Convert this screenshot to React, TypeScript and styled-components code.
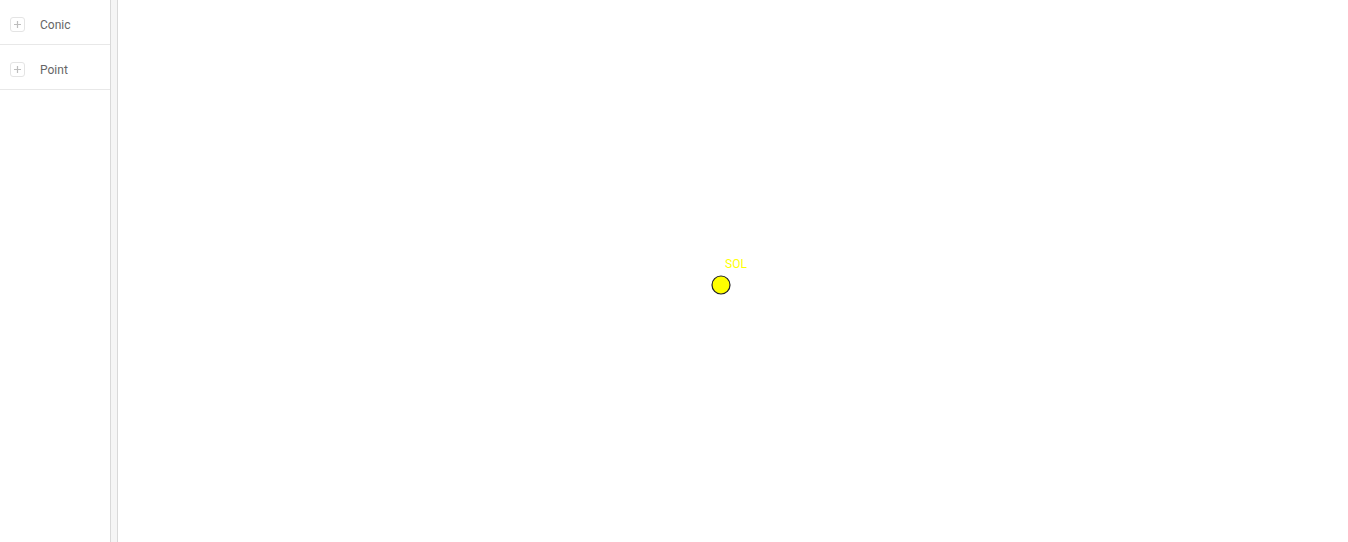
import React from "react";
import styled, { createGlobalStyle } from "styled-components";

const Global = createGlobalStyle`
  html, body { margin: 0; padding: 0; background: #fff; }
  body { font-family: Roboto, "Liberation Sans", Arial, sans-serif; }
  #root { height: 100vh; }
`;

const Layout = styled.div`
  display: flex;
  height: 100vh;
  overflow: hidden;
`;

const Sidebar = styled.aside`
  width: 110px;
  flex: none;
  display: flex;
  flex-direction: column;
`;

const Row = styled.div`
  box-sizing: content-box;
  height: 39px;
  padding-top: 5px;
  padding-left: 10px;
  display: flex;
  align-items: center;
  gap: 15px;
  border-bottom: 1px solid #e8e8e8;
  font-size: 12px;
  color: #666;
`;

const PlusBox = styled.span`
  width: 13px;
  height: 13px;
  border: 1px solid #e4e4e4;
  border-radius: 3px;
  display: flex;
  align-items: center;
  justify-content: center;
  box-sizing: content-box;
`;

const Splitter = styled.div`
  width: 6px;
  flex: none;
  background: #f5f5f5;
  border-left: 1px solid #d9d9d9;
  border-right: 1px solid #d9d9d9;
`;

const Canvas = styled.main`
  flex: 1;
  position: relative;
  background: #fff;
`;

const Planet = styled.div`
  position: absolute;
  left: 593px;
  top: 275px;
  width: 20px;
  height: 20px;
`;

const Label = styled.span`
  position: absolute;
  left: 607px;
  top: 257px;
  font-size: 12px;
  color: #ffff00;
  font-family: Roboto, "Liberation Sans", Arial, sans-serif;
`;

const Plus = () => (
  <svg width="9" height="9" viewBox="0 0 9 9">
    <path d="M4.5 1v7M1 4.5h7" stroke="#bdbdbd" strokeWidth="1.2" />
  </svg>
);

export default function App() {
  return (
    <>
      <Global />
      <Layout>
        <Sidebar>
          <Row>
            <PlusBox><Plus /></PlusBox>
            Conic
          </Row>
          <Row>
            <PlusBox><Plus /></PlusBox>
            Point
          </Row>
        </Sidebar>
        <Splitter />
        <Canvas>
          <Label>SOL</Label>
          <Planet>
            <svg width="20" height="20" viewBox="0 0 20 20">
              <circle cx="10" cy="10" r="9" fill="#ffff00" stroke="#222" strokeWidth="1.2" />
            </svg>
          </Planet>
        </Canvas>
      </Layout>
    </>
  );
}
